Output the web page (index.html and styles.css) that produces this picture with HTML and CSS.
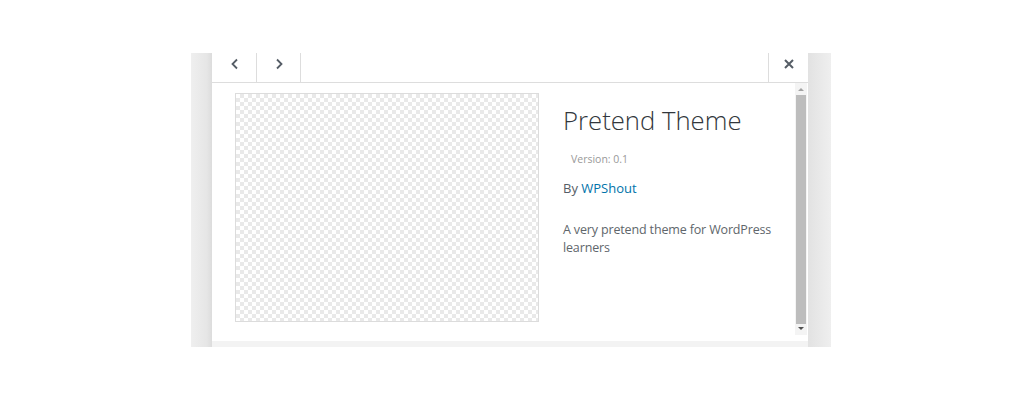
FILE: index.html
```html
<!DOCTYPE html>
<html lang="en">
<head>
  <meta charset="UTF-8" />
  <title>Theme Details</title>
  <link rel="stylesheet" href="styles.css">
</head>
<body>
  <div class="stage">
    <div class="side side-left"></div>
    <div class="modal">
      <div class="modal-header">
        <button class="nav-btn" aria-label="Previous theme">
          <svg width="10" height="12" viewBox="0 0 10 12"><path d="M7 1.5 L2.5 6 L7 10.5" fill="none" stroke="#555d66" stroke-width="1.8"/></svg>
        </button>
        <button class="nav-btn" aria-label="Next theme">
          <svg width="10" height="12" viewBox="0 0 10 12"><path d="M3 1.5 L7.5 6 L3 10.5" fill="none" stroke="#555d66" stroke-width="1.8"/></svg>
        </button>
        <button class="close-btn" aria-label="Close">
          <svg width="10" height="10" viewBox="0 0 10 10"><path d="M1 1 L9 9 M9 1 L1 9" fill="none" stroke="#555d66" stroke-width="2"/></svg>
        </button>
      </div>
      <div class="modal-body">
        <div class="theme-about">
          <div class="screenshot"></div>
          <div class="theme-info">
            <h2 class="theme-name">Pretend Theme</h2>
            <span class="theme-version">Version: 0.1</span>
            <p class="theme-author">By <a href="#">WPShout</a></p>
            <p class="theme-description">A very pretend theme for WordPress learners</p>
          </div>
        </div>
        <div class="scrollbar">
          <span class="arrow up"></span>
          <span class="thumb"></span>
          <span class="arrow down"></span>
        </div>
      </div>
      <div class="modal-footer"></div>
    </div>
    <div class="side side-right"></div>
  </div>
</body>
</html>
```

FILE: styles.css
```css
body {
  background-color: #fff;
  font-family: "Open Sans", sans-serif;
  margin: 0;
  padding: 0;
}
.stage {
  display: flex;
  width: 640px;
  height: 294px;
  margin: 53px 0 0 191px;
}
.side-left {
  width: 21px;
  background: linear-gradient(to right, #efefef, #e6e6e6 75%, #dcdcdc);
}
.side-right {
  width: 23px;
  background: linear-gradient(to right, #e2e2e2, #efefef);
}
.modal {
  flex: 1;
  display: flex;
  flex-direction: column;
  background-color: #fff;
}
.modal-header {
  display: flex;
  height: 29px;
  border-bottom: 1px solid #dddddd;
}
.nav-btn, .close-btn {
  display: flex;
  align-items: center;
  justify-content: center;
  width: 44px;
  height: 29px;
  padding: 0 0 8px;
  background: #fff;
  border: none;
  cursor: pointer;
}
.nav-btn {
  border-right: 1px solid #dddddd;
}
.nav-btn:first-child {
  margin-left: 1px;
}
.close-btn {
  margin-left: auto;
  width: 40px;
  border-left: 1px solid #dddddd;
}
.modal-body {
  display: flex;
  height: 258px;
}
.theme-about {
  flex: 1;
  display: flex;
  padding: 10px 0 0 23px;
}
.screenshot {
  width: 302px;
  height: 227px;
  border: 1px solid #dcdcdc;
  background-color: #fff;
  background-image:
    linear-gradient(45deg, #e9e9e9 25%, transparent 25%, transparent 75%, #e9e9e9 75%),
    linear-gradient(45deg, #e9e9e9 25%, transparent 25%, transparent 75%, #e9e9e9 75%);
  background-size: 8px 8px;
  background-position: 0 0, 4px 4px;
}
.theme-info {
  margin-left: 24px;
  width: 215px;
}
.theme-name {
  margin: 11px 0 0;
  font-size: 25.7px;
  font-weight: 300;
  line-height: 1.3;
  color: #32373c;
}
.theme-version {
  display: block;
  margin: 15px 0 0 8px;
  font-size: 10.5px;
  color: #999;
}
.theme-author {
  margin: 13px 0 0;
  font-size: 13px;
  color: #555d66;
}
.theme-author a {
  color: #0073aa;
  text-decoration: none;
}
.theme-description {
  margin: 24px 0 0;
  font-size: 12.5px;
  letter-spacing: -0.15px;
  line-height: 18px;
  color: #60666b;
}
.scrollbar {
  display: flex;
  flex-direction: column;
  align-items: center;
  width: 12px;
  margin: 0 1px 6px 0;
  background-color: #f4f4f4;
}
.arrow {
  width: 0;
  height: 0;
  margin: 5px 0 4px;
  border-left: 3px solid transparent;
  border-right: 3px solid transparent;
}
.arrow.up {
  border-bottom: 3px solid #a3a3a3;
}
.arrow.down {
  margin: 3px 0 5px;
  border-top: 3px solid #505050;
}
.thumb {
  flex: 1;
  width: 10px;
  background-color: #bdbdbd;
}
.modal-footer {
  height: 6px;
  background-color: #f3f3f3;
}
```
